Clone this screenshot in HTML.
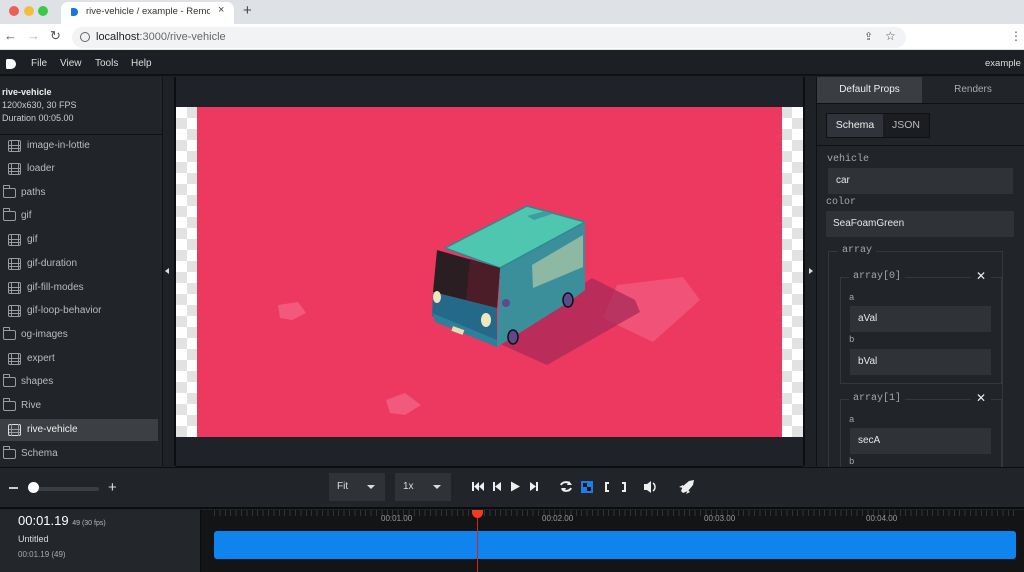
<!DOCTYPE html>
<html><head><meta charset="utf-8"><style>
*{margin:0;padding:0;box-sizing:border-box}
body{width:1024px;height:572px;overflow:hidden;font-family:"Liberation Sans",sans-serif;background:#1f2228;position:relative;font-size:10px;color:#ccc}
.a{position:absolute}
.chk{background-color:#fff;background-image:conic-gradient(#e2e2e2 25%,transparent 0 50%,#e2e2e2 0 75%,transparent 0);background-size:22px 22px}
.item{position:absolute;left:0;height:22px;width:158px;font-size:10px;color:#b9bbbe;line-height:22px}
.film{position:absolute;left:8px;top:5px;width:13px;height:12px;border:1.5px solid #9a9ca0;border-radius:2px}
.film:before{content:"";position:absolute;left:2px;top:-1px;bottom:-1px;width:6px;border-left:1.2px solid #9a9ca0;border-right:1.2px solid #9a9ca0}
.film:after{content:"";position:absolute;left:0;right:0;top:3.5px;height:2px;border-top:1.2px solid #9a9ca0;border-bottom:1.2px solid #9a9ca0}
.fold{position:absolute;left:3px;top:6px;width:13px;height:10px;border:1.3px solid #9a9ca0;border-radius:1px 2px 2px 2px}
.fold:before{content:"";position:absolute;left:-1.3px;top:-4px;width:5px;height:3px;border:1.3px solid #9a9ca0;border-bottom:none;border-radius:1px 1px 0 0}
.inp{position:absolute;background:#2f3338;color:#e6e6e6;font-size:10px;padding-left:8px;line-height:26px;height:26px}
.lbl{position:absolute;font-family:"Liberation Mono",monospace;font-size:10px;color:#a5a7aa}
.sel{position:absolute;top:473px;height:28px;background:#2f3338;color:#ddd;font-size:10px;line-height:28px;padding-left:8px}
.sel:after{content:"";position:absolute;right:10px;top:12px;border:4px solid transparent;border-top:4px solid #ddd}
.tk{position:absolute;top:514px;font-size:8px;color:#999}
</style></head><body>
<div class="a" style="left:0;top:0;width:1024px;height:24px;background:#dee1e6"></div>
<div class="a" style="left:9px;top:6px;width:10px;height:10px;border-radius:50%;background:#ee5e55"></div>
<div class="a" style="left:24px;top:6px;width:10px;height:10px;border-radius:50%;background:#f4bd3d"></div>
<div class="a" style="left:38px;top:6px;width:10px;height:10px;border-radius:50%;background:#3ec84b"></div>
<div class="a" style="left:61px;top:2px;width:173px;height:22px;background:#fff;border-radius:7px 7px 0 0"></div>
<div class="a" style="left:71px;top:8px;width:7px;height:8px;background:#1a73e8;border-radius:1px 4px 4px 1px"></div>
<div class="a" style="left:86px;top:6px;font-size:9.5px;color:#333;white-space:nowrap;width:124px;overflow:hidden">rive-vehicle / example - Remotion</div>
<div class="a" style="left:218px;top:4px;font-size:11px;color:#444">×</div>
<div class="a" style="left:243px;top:2px;font-size:15px;color:#444">+</div>
<div class="a" style="left:0;top:24px;width:1024px;height:26px;background:#fff;border-bottom:1px solid #ddd"></div>
<div class="a" style="left:4px;top:28px;font-size:13px;color:#555">←</div>
<div class="a" style="left:27px;top:28px;font-size:13px;color:#bbb">→</div>
<div class="a" style="left:50px;top:28px;font-size:13px;color:#555">↻</div>
<div class="a" style="left:72px;top:27px;width:834px;height:21px;background:#f1f3f4;border-radius:11px"></div>
<div class="a" style="left:80px;top:32px;width:10px;height:10px;border:1.2px solid #666;border-radius:50%"></div>
<div class="a" style="left:96px;top:31px;font-size:11px;color:#222">localhost<span style="color:#666">:3000/rive-vehicle</span></div>
<div class="a" style="left:864px;top:30px;font-size:11px;color:#555">⇪</div>
<div class="a" style="left:885px;top:29px;font-size:12px;color:#555">☆</div>
<div class="a" style="left:1010px;top:29px;font-size:12px;color:#555">⋮</div>
<div class="a" style="left:0;top:51px;width:1024px;height:25px;background:#1c1f23;border-bottom:2px solid #111"></div>
<div class="a" style="left:6px;top:59px;width:10px;height:10px;background:#fff;border-radius:2px 6px 6px 2px"></div>
<div class="a" style="left:31px;top:58px;color:#ddd">File</div>
<div class="a" style="left:60px;top:58px;color:#ddd">View</div>
<div class="a" style="left:95px;top:58px;color:#ddd">Tools</div>
<div class="a" style="left:131px;top:58px;color:#ddd">Help</div>
<div class="a" style="left:985px;top:58px;color:#ddd;font-size:9.5px">example</div>
<div class="a" style="left:0;top:77px;width:162px;height:389px;background:#212429"></div>
<div class="a" style="left:2px;top:87px;font-weight:bold;color:#eee;font-size:9px">rive-vehicle</div>
<div class="a" style="left:2px;top:100px;color:#ccc;font-size:9px">1200x630, 30 FPS</div>
<div class="a" style="left:2px;top:113px;color:#ccc;font-size:9px">Duration 00:05.00</div>
<div class="a" style="left:0;top:134px;width:162px;height:1px;background:#111"></div>
<div class="item" style="top:135px"><i class="film"></i><span style="margin-left:27px">image-in-lottie</span></div>
<div class="item" style="top:158px"><i class="film"></i><span style="margin-left:27px">loader</span></div>
<div class="item" style="top:182px"><i class="fold"></i><span style="margin-left:21px">paths</span></div>
<div class="item" style="top:205px"><i class="fold"></i><span style="margin-left:21px">gif</span></div>
<div class="item" style="top:229px"><i class="film"></i><span style="margin-left:27px">gif</span></div>
<div class="item" style="top:253px"><i class="film"></i><span style="margin-left:27px">gif-duration</span></div>
<div class="item" style="top:277px"><i class="film"></i><span style="margin-left:27px">gif-fill-modes</span></div>
<div class="item" style="top:300px"><i class="film"></i><span style="margin-left:27px">gif-loop-behavior</span></div>
<div class="item" style="top:324px"><i class="fold"></i><span style="margin-left:21px">og-images</span></div>
<div class="item" style="top:348px"><i class="film"></i><span style="margin-left:27px">expert</span></div>
<div class="item" style="top:371px"><i class="fold"></i><span style="margin-left:21px">shapes</span></div>
<div class="item" style="top:395px"><i class="fold"></i><span style="margin-left:21px">Rive</span></div>
<div class="item" style="top:419px;background:#3c3f44;color:#eee"><i class="film" style="border-color:#ddd"></i><span style="margin-left:27px">rive-vehicle</span></div>
<div class="item" style="top:443px"><i class="fold"></i><span style="margin-left:21px">Schema</span></div>
<div class="a" style="left:162px;top:77px;width:14px;height:389px;background:#1e2126;border-left:1px solid #111;border-right:2px solid #0d0e10"></div>
<div class="a" style="left:165px;top:268px;border:3px solid transparent;border-right:4px solid #ddd;border-left:none"></div>
<div class="a" style="left:803px;top:77px;width:14px;height:389px;background:#1e2126;border-left:2px solid #0d0e10;border-right:1px solid #111"></div>
<div class="a" style="left:809px;top:268px;border:3px solid transparent;border-left:4px solid #ddd;border-right:none"></div>
<div class="a" style="left:176px;top:77px;width:627px;height:389px;background:#1f2228"></div>
<div class="a" style="left:176px;top:466px;width:627px;height:1px;background:#0d0e10"></div>
<div class="a chk" style="left:176px;top:107px;width:627px;height:330px"></div>
<div class="a" style="left:197px;top:107px;width:585px;height:330px;background:#ed385f;overflow:hidden">
<svg width="585" height="330" viewBox="197 107 585 330" style="position:absolute;left:0;top:0">
<polygon points="617,285 683,277 700,300 653,342 603,318" fill="#f36a8a" opacity="0.55"/>
<polygon points="278,305 298,302 306,313 292,320 280,318" fill="#f36a8a" opacity="0.7"/>
<polygon points="386,400 405,393 421,405 405,415 390,413" fill="#f36a8a" opacity="0.7"/>
<polygon points="498,343 547,365 640,312 635,300 592,278 560,300" fill="#a82a5a" opacity="0.75"/>
<path d="M500,268 L585,222 L585,290 L572,300 L497,347 Z" fill="#3b8f9b"/>
<path d="M445,248 L527,206 L585,222 L500,268 Z" fill="#4fc6b0" stroke="#2d8a8f" stroke-width="1.5" stroke-linejoin="round"/>
<path d="M527,216 L545,211 L552,214 L534,220 Z" fill="#3e9e9e"/>
<path d="M437,250 L500,268 L497,308 L433,292 Z" fill="#2a1e22"/>
<path d="M470,259 L500,268 L497,308 L466,300 Z" fill="#4a1d28"/>
<path d="M433,292 L497,308 L497,347 L432,316 Z" fill="#24698a"/>
<path d="M432,313 L497,340 L497,347 L435,322 Z" fill="#2f7e9a"/>
<path d="M532,265 L583,235 L583,267 L533,288 Z" fill="#8db8a3"/>
<ellipse cx="437" cy="297" rx="4" ry="6" fill="#efe6c0"/>
<ellipse cx="486" cy="320" rx="5" ry="7" fill="#efe6c0"/>
<rect x="452" y="328" width="12" height="5" fill="#e8dcb0" transform="rotate(20 458 330)"/>
<ellipse cx="513" cy="337" rx="5" ry="7" fill="#5c4a8a" stroke="#111" stroke-width="1.5"/>
<ellipse cx="568" cy="300" rx="5" ry="7" fill="#5c4a8a" stroke="#111" stroke-width="1.5"/>
<circle cx="506" cy="303" r="4" fill="#5c4a8a"/>
</svg></div>
<div class="a" style="left:817px;top:77px;width:207px;height:389px;background:#212429"></div>
<div class="a" style="left:817px;top:77px;width:105px;height:26px;background:#3a3d42;color:#eee;font-size:10px;line-height:26px;text-align:center">Default Props</div>
<div class="a" style="left:922px;top:77px;width:102px;height:26px;color:#aaa;font-size:10px;line-height:26px;text-align:center">Renders</div>
<div class="a" style="left:817px;top:103px;width:207px;height:1px;background:#111"></div>
<div class="a" style="left:826px;top:113px;width:104px;height:25px;background:#1b1d21;border:1px solid #111"></div>
<div class="a" style="left:827px;top:114px;width:56px;height:23px;background:#30343a;color:#eee;line-height:23px;text-align:center;font-size:10.5px">Schema</div>
<div class="a" style="left:883px;top:114px;width:46px;height:23px;color:#bbb;line-height:23px;text-align:center;font-size:10.5px">JSON</div>
<div class="a" style="left:817px;top:145px;width:207px;height:1px;background:#111"></div>
<div class="lbl" style="left:827px;top:154px">vehicle</div>
<div class="inp" style="left:828px;top:168px;width:185px">car</div>
<div class="lbl" style="left:826px;top:197px">color</div>
<div class="inp" style="left:826px;top:211px;width:188px;padding-left:7px">SeaFoamGreen</div>
<div class="a" style="left:828px;top:251px;width:175px;height:220px;border:1px solid #34373c;border-bottom:none"></div>
<div class="lbl" style="left:838px;top:245px;background:#212429;padding:0 4px">array</div>
<div class="a" style="left:840px;top:277px;width:162px;height:107px;border:1px solid #34373c"></div>
<div class="lbl" style="left:849px;top:271px;background:#212429;padding:0 4px">array[0]</div>
<div class="a" style="left:971px;top:269px;background:#212429;padding:0 5px;color:#eee;font-size:12px">✕</div>
<div class="lbl" style="left:849px;top:293px;font-size:9px">a</div>
<div class="inp" style="left:850px;top:306px;width:141px">aVal</div>
<div class="lbl" style="left:849px;top:335px;font-size:9px">b</div>
<div class="inp" style="left:850px;top:349px;width:141px">bVal</div>
<div class="a" style="left:840px;top:399px;width:162px;height:80px;border:1px solid #34373c"></div>
<div class="lbl" style="left:849px;top:393px;background:#212429;padding:0 4px">array[1]</div>
<div class="a" style="left:971px;top:391px;background:#212429;padding:0 5px;color:#eee;font-size:12px">✕</div>
<div class="lbl" style="left:849px;top:415px;font-size:9px">a</div>
<div class="inp" style="left:850px;top:428px;width:141px">secA</div>
<div class="lbl" style="left:849px;top:457px;font-size:9px">b</div>
<div class="a" style="left:0;top:467px;width:1024px;height:42px;background:#212429;border-top:1px solid #0d0e10;border-bottom:2px solid #0b0c0e"></div>
<div class="a" style="left:9px;top:487px;width:9px;height:1.5px;background:#ccc"></div>
<div class="a" style="left:35px;top:487px;width:64px;height:4px;background:#3a3d42;border-radius:2px"></div>
<div class="a" style="left:28px;top:482px;width:11px;height:11px;border-radius:50%;background:#fff"></div>
<div class="a" style="left:108px;top:479px;font-size:15px;color:#ddd">+</div>
<div class="sel" style="left:329px;width:56px">Fit</div>
<div class="sel" style="left:395px;width:56px">1x</div>
<svg class="a" style="left:470px;top:479px" width="230" height="16" viewBox="0 0 230 16" fill="#eee">
<rect x="2" y="3" width="2" height="9"/><path d="M9,3 L4,7.5 L9,12Z M14,3 L9,7.5 L14,12Z"/>
<rect x="23" y="3" width="2" height="9"/><path d="M31,3 L25,7.5 L31,12Z"/>
<path d="M41,2.5 L50,7.5 L41,12.5Z"/>
<path d="M60,3 L66,7.5 L60,12Z"/><rect x="66" y="3" width="2" height="9"/>
<path d="M91,6 a5,4 0 0 1 9,-1 M101,9 a5,4 0 0 1 -9,1" stroke="#eee" stroke-width="2" fill="none"/><path d="M99,2 L102,6 L97,6Z M94,13 L91,9 L96,9Z"/>
<rect x="111" y="2" width="12" height="12" fill="#1d7eea"/><rect x="113" y="4" width="4" height="4" fill="#111"/><rect x="117" y="8" width="4" height="4" fill="#111"/>
<path d="M135,3 h4 v2 h-2 v6 h2 v2 h-4Z"/><path d="M152,3 h4 v10 h-4 v-2 h2 v-6 h-2Z"/>
<path d="M174,5 h3 l4,-3 v12 l-4,-3 h-3Z"/><path d="M183,4 a5,5 0 0 1 0,8" stroke="#eee" stroke-width="1.5" fill="none"/>
<path d="M211,12 l2,-5 l6,-5 l5,-1 l-1,5 l-5,6 l-5,2Z M209,8 l4,-2 l0,3Z M216,15 l2,-4 l2,2Z"/>
</svg>
<div class="a" style="left:0;top:510px;width:200px;height:62px;background:#23262b"></div>
<div class="a" style="left:200px;top:510px;width:824px;height:62px;background:#131416"></div>
<div class="a" style="left:200px;top:510px;width:1px;height:62px;background:#0b0c0e"></div>
<div class="a" style="left:18px;top:513px;font-size:13px;color:#fff">00:01.19 <span style="font-size:7px;color:#bbb">49 (30 fps)</span></div>
<div class="a" style="left:18px;top:534px;font-size:9px;color:#ddd">Untitled</div>
<div class="a" style="left:18px;top:550px;font-size:8px;color:#aaa">00:01.19 (49)</div>
<div class="a" style="left:214px;top:510px;width:802px;height:6px;background:repeating-linear-gradient(90deg,#333 0 1px,transparent 1px 5.4px)"></div>
<div class="tk" style="left:381px">00:01.00</div>
<div class="tk" style="left:542px">00:02.00</div>
<div class="tk" style="left:704px">00:03.00</div>
<div class="tk" style="left:866px">00:04.00</div>
<div class="a" style="left:214px;top:531px;width:802px;height:28px;background:#0f84ee;border-radius:3px"></div>
<div class="a" style="left:477px;top:510px;width:1px;height:62px;background:#d2261a"></div>
<div class="a" style="left:472px;top:510px;width:11px;height:8px;background:#f23a1e;border-radius:0 0 6px 6px"></div>
</body></html>
